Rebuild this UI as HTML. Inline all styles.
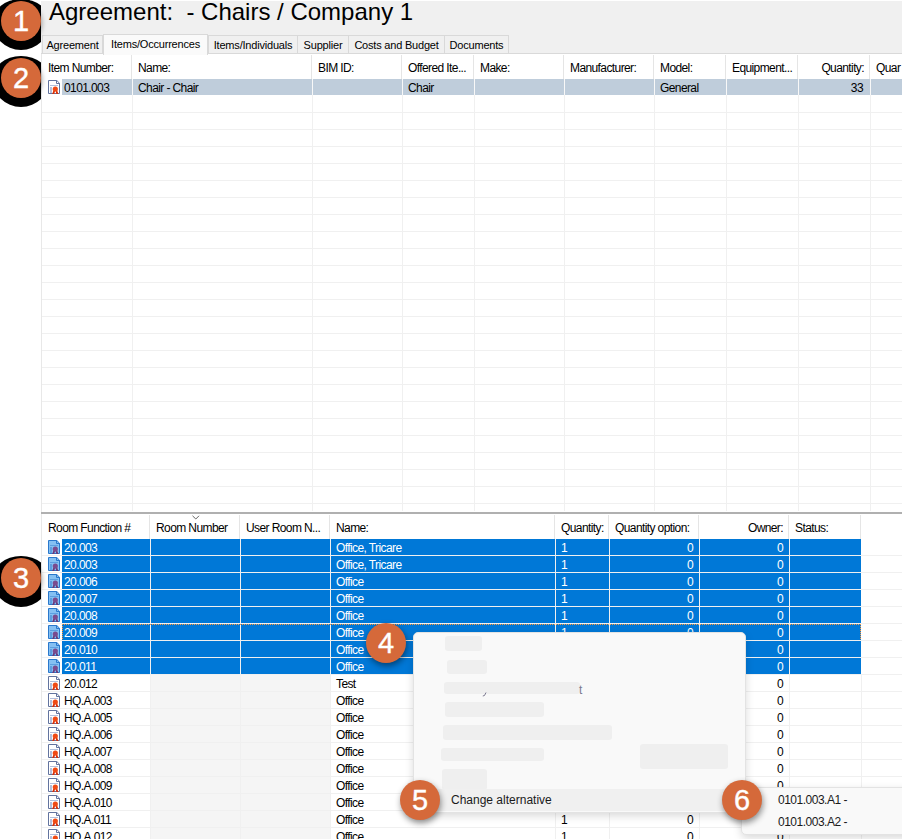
<!DOCTYPE html><html><head><meta charset="utf-8"><style>
*{box-sizing:border-box}
html,body{margin:0;padding:0}
body{width:902px;height:839px;overflow:hidden;position:relative;background:#fff;font-family:"Liberation Sans",sans-serif;font-size:11px;color:#000}
.abs{position:absolute}
.t{position:absolute;white-space:nowrap;line-height:16px;height:16px;font-size:12px;letter-spacing:-0.6px}
.ic{position:absolute}
.tab{position:absolute;border:1px solid #d9d9d9;background:#f0f0f0;font-size:11px;line-height:17px;text-align:center;white-space:nowrap;letter-spacing:-0.2px}
.vl{position:absolute;width:1px}
.hl{position:absolute;height:1px}
.red{position:absolute;background:#efefef;border-radius:3px}
.circ{position:absolute;width:40px;height:40px;border-radius:50%;background:#d5693a;color:#fff;font-size:29px;line-height:41px;text-align:center;-webkit-text-stroke:0.4px #fff}
</style></head><body>

<div class="abs" style="left:41px;top:1px;width:861px;height:838px;background:#f0f0f0"></div>
<div class="abs" style="left:49px;top:0px;font-size:24px;line-height:24px;white-space:nowrap">Agreement:&nbsp; - Chairs / Company 1</div>
<div class="tab" style="left:42px;top:35px;width:61px;height:19px;line-height:18px">Agreement</div>
<div class="tab" style="left:103px;top:34px;width:105px;height:21px;background:#fafafa;border-bottom:none;z-index:2;line-height:19px">Items/Occurrences</div>
<div class="tab" style="left:208px;top:35px;width:90px;height:19px;line-height:18px">Items/Individuals</div>
<div class="tab" style="left:297px;top:35px;width:52px;height:19px;line-height:18px">Supplier</div>
<div class="tab" style="left:348px;top:35px;width:97px;height:19px;line-height:18px">Costs and Budget</div>
<div class="tab" style="left:444px;top:35px;width:65px;height:19px;line-height:18px">Documents</div>
<div class="hl" style="left:41px;top:53px;width:861px;background:#d9d9d9"></div>
<div class="abs" style="left:41px;top:54px;width:861px;height:458px;background:#fff"></div>
<div class="abs" style="left:41px;top:96px;width:861px;height:408px;background:repeating-linear-gradient(to bottom,transparent 0,transparent 16px,#f0f0f0 16px,#f0f0f0 17px)"></div>
<div class="vl" style="left:131px;top:55px;height:24px;background:#e5e5e5"></div>
<div class="vl" style="left:132px;top:79px;height:432px;background:#f0f0f0"></div>
<div class="vl" style="left:311px;top:55px;height:24px;background:#e5e5e5"></div>
<div class="vl" style="left:312px;top:79px;height:432px;background:#f0f0f0"></div>
<div class="vl" style="left:401px;top:55px;height:24px;background:#e5e5e5"></div>
<div class="vl" style="left:402px;top:79px;height:432px;background:#f0f0f0"></div>
<div class="vl" style="left:473px;top:55px;height:24px;background:#e5e5e5"></div>
<div class="vl" style="left:474px;top:79px;height:432px;background:#f0f0f0"></div>
<div class="vl" style="left:563px;top:55px;height:24px;background:#e5e5e5"></div>
<div class="vl" style="left:564px;top:79px;height:432px;background:#f0f0f0"></div>
<div class="vl" style="left:653px;top:55px;height:24px;background:#e5e5e5"></div>
<div class="vl" style="left:654px;top:79px;height:432px;background:#f0f0f0"></div>
<div class="vl" style="left:725px;top:55px;height:24px;background:#e5e5e5"></div>
<div class="vl" style="left:726px;top:79px;height:432px;background:#f0f0f0"></div>
<div class="vl" style="left:797px;top:55px;height:24px;background:#e5e5e5"></div>
<div class="vl" style="left:798px;top:79px;height:432px;background:#f0f0f0"></div>
<div class="vl" style="left:869px;top:55px;height:24px;background:#e5e5e5"></div>
<div class="vl" style="left:870px;top:79px;height:432px;background:#f0f0f0"></div>
<div class="abs" style="left:62px;top:79px;width:840px;height:16px;background:#bfcddb"></div>
<div class="vl" style="left:132px;top:79px;height:16px;background:#f8f8f8"></div>
<div class="vl" style="left:312px;top:79px;height:16px;background:#f8f8f8"></div>
<div class="vl" style="left:402px;top:79px;height:16px;background:#f8f8f8"></div>
<div class="vl" style="left:474px;top:79px;height:16px;background:#f8f8f8"></div>
<div class="vl" style="left:564px;top:79px;height:16px;background:#f8f8f8"></div>
<div class="vl" style="left:654px;top:79px;height:16px;background:#f8f8f8"></div>
<div class="vl" style="left:726px;top:79px;height:16px;background:#f8f8f8"></div>
<div class="vl" style="left:798px;top:79px;height:16px;background:#f8f8f8"></div>
<div class="vl" style="left:870px;top:79px;height:16px;background:#f8f8f8"></div>
<div class="t" style="left:48px;top:60px">Item Number:</div>
<div class="t" style="left:138px;top:60px">Name:</div>
<div class="t" style="left:318px;top:60px">BIM ID:</div>
<div class="t" style="left:408px;top:60px">Offered Ite...</div>
<div class="t" style="left:480px;top:60px">Make:</div>
<div class="t" style="left:570px;top:60px">Manufacturer:</div>
<div class="t" style="left:660px;top:60px">Model:</div>
<div class="t" style="left:732px;top:60px">Equipment...</div>
<div class="t" style="left:798px;width:66px;text-align:right;top:60px">Quantity:</div>
<div class="t" style="left:876px;top:60px">Quar</div>
<svg class="ic" style="left:48px;top:80px" width="12" height="14" viewBox="0 0 12 14"><path d="M0.5 0.5H8.8L11.5 3.2V13.5H0.5Z" fill="#ffffff" stroke="#62739e"/><path d="M8.5 0.5V3.5H11.5" fill="none" stroke="#62739e"/><rect x="2" y="5" width="8" height="1" fill="#b4c0dc"/><rect x="2" y="7" width="2" height="6" fill="#b4c0dc"/><path d="M4.2 14L5.4 10.5H7.2L6.2 14ZM8.4 14L7.4 10.5H9.2L10.4 14Z" fill="#d83008"/><circle cx="7.3" cy="9" r="2.6" fill="#f04a14"/></svg>
<div class="t" style="left:64px;top:80px">0101.003</div>
<div class="t" style="left:138px;top:80px">Chair - Chair</div>
<div class="t" style="left:408px;top:80px">Chair</div>
<div class="t" style="left:660px;top:80px">General</div>
<div class="t" style="left:797px;width:66px;text-align:right;top:80px">33</div>
<div class="hl" style="left:41px;top:512px;width:861px;height:2px;background:#b0b0b0"></div>
<div class="abs" style="left:41px;top:514px;width:861px;height:325px;background:#fff"></div>
<div class="vl" style="left:149px;top:515px;height:24px;background:#e5e5e5"></div>
<div class="vl" style="left:239px;top:515px;height:24px;background:#e5e5e5"></div>
<div class="vl" style="left:329px;top:515px;height:24px;background:#e5e5e5"></div>
<div class="vl" style="left:554px;top:515px;height:24px;background:#e5e5e5"></div>
<div class="vl" style="left:608px;top:515px;height:24px;background:#e5e5e5"></div>
<div class="vl" style="left:698px;top:515px;height:24px;background:#e5e5e5"></div>
<div class="vl" style="left:788px;top:515px;height:24px;background:#e5e5e5"></div>
<div class="vl" style="left:860px;top:515px;height:24px;background:#e5e5e5"></div>
<div class="t" style="left:48px;top:520px">Room Function #</div>
<div class="t" style="left:156px;top:520px">Room Number</div>
<div class="t" style="left:246px;top:520px">User Room N...</div>
<div class="t" style="left:336px;top:520px">Name:</div>
<div class="t" style="left:561px;top:520px">Quantity:</div>
<div class="t" style="left:615px;top:520px">Quantity option:</div>
<div class="t" style="left:699px;width:84px;text-align:right;top:520px">Owner:</div>
<div class="t" style="left:795px;top:520px">Status:</div>
<svg class="abs" style="left:192px;top:515px" width="8" height="5" viewBox="0 0 8 5"><path d="M0.5 0.8L3.8 4L7 0.8" fill="none" stroke="#666" stroke-width="1"/></svg>
<div class="vl" style="left:41px;top:54px;height:458px;background:#e8e8e8"></div>
<div class="vl" style="left:41px;top:514px;height:325px;background:#e8e8e8"></div>
<div class="abs" style="left:62px;top:539px;width:799px;height:16px;background:#0078d7"></div>
<div class="hl" style="left:42px;top:555px;width:860px;background:#f0f0f0"></div>
<svg class="ic" style="left:48px;top:540px" width="12" height="14" viewBox="0 0 12 14"><path d="M0.5 0.5H8.8L11.5 3.2V13.5H0.5Z" fill="#85c0f2" stroke="#2a78cc"/><path d="M8.5 0.5V3.5H11.5" fill="none" stroke="#2a78cc"/><rect x="2" y="5" width="8" height="1" fill="#5d9fe0"/><rect x="2" y="7" width="2" height="6" fill="#5d9fe0"/><path d="M4.2 14L5.4 10.5H7.2L6.2 14ZM8.4 14L7.4 10.5H9.2L10.4 14Z" fill="#6a3a7a"/><circle cx="7.3" cy="9" r="2.6" fill="#7a4b8e"/></svg>
<div class="t" style="left:64px;top:540px;color:#fff">20.003</div>
<div class="t" style="left:336px;top:540px;color:#fff">Office, Tricare</div>
<div class="t" style="left:561px;top:540px;color:#fff">1</div>
<div class="t" style="left:609px;width:84px;text-align:right;top:540px;color:#fff">0</div>
<div class="t" style="left:699px;width:84px;text-align:right;top:540px;color:#fff">0</div>
<div class="abs" style="left:62px;top:556px;width:799px;height:16px;background:#0078d7"></div>
<div class="hl" style="left:42px;top:572px;width:860px;background:#f0f0f0"></div>
<svg class="ic" style="left:48px;top:557px" width="12" height="14" viewBox="0 0 12 14"><path d="M0.5 0.5H8.8L11.5 3.2V13.5H0.5Z" fill="#85c0f2" stroke="#2a78cc"/><path d="M8.5 0.5V3.5H11.5" fill="none" stroke="#2a78cc"/><rect x="2" y="5" width="8" height="1" fill="#5d9fe0"/><rect x="2" y="7" width="2" height="6" fill="#5d9fe0"/><path d="M4.2 14L5.4 10.5H7.2L6.2 14ZM8.4 14L7.4 10.5H9.2L10.4 14Z" fill="#6a3a7a"/><circle cx="7.3" cy="9" r="2.6" fill="#7a4b8e"/></svg>
<div class="t" style="left:64px;top:557px;color:#fff">20.003</div>
<div class="t" style="left:336px;top:557px;color:#fff">Office, Tricare</div>
<div class="t" style="left:561px;top:557px;color:#fff">1</div>
<div class="t" style="left:609px;width:84px;text-align:right;top:557px;color:#fff">0</div>
<div class="t" style="left:699px;width:84px;text-align:right;top:557px;color:#fff">0</div>
<div class="abs" style="left:62px;top:573px;width:799px;height:16px;background:#0078d7"></div>
<div class="hl" style="left:42px;top:589px;width:860px;background:#f0f0f0"></div>
<svg class="ic" style="left:48px;top:574px" width="12" height="14" viewBox="0 0 12 14"><path d="M0.5 0.5H8.8L11.5 3.2V13.5H0.5Z" fill="#85c0f2" stroke="#2a78cc"/><path d="M8.5 0.5V3.5H11.5" fill="none" stroke="#2a78cc"/><rect x="2" y="5" width="8" height="1" fill="#5d9fe0"/><rect x="2" y="7" width="2" height="6" fill="#5d9fe0"/><path d="M4.2 14L5.4 10.5H7.2L6.2 14ZM8.4 14L7.4 10.5H9.2L10.4 14Z" fill="#6a3a7a"/><circle cx="7.3" cy="9" r="2.6" fill="#7a4b8e"/></svg>
<div class="t" style="left:64px;top:574px;color:#fff">20.006</div>
<div class="t" style="left:336px;top:574px;color:#fff">Office</div>
<div class="t" style="left:561px;top:574px;color:#fff">1</div>
<div class="t" style="left:609px;width:84px;text-align:right;top:574px;color:#fff">0</div>
<div class="t" style="left:699px;width:84px;text-align:right;top:574px;color:#fff">0</div>
<div class="abs" style="left:62px;top:590px;width:799px;height:16px;background:#0078d7"></div>
<div class="hl" style="left:42px;top:606px;width:860px;background:#f0f0f0"></div>
<svg class="ic" style="left:48px;top:591px" width="12" height="14" viewBox="0 0 12 14"><path d="M0.5 0.5H8.8L11.5 3.2V13.5H0.5Z" fill="#85c0f2" stroke="#2a78cc"/><path d="M8.5 0.5V3.5H11.5" fill="none" stroke="#2a78cc"/><rect x="2" y="5" width="8" height="1" fill="#5d9fe0"/><rect x="2" y="7" width="2" height="6" fill="#5d9fe0"/><path d="M4.2 14L5.4 10.5H7.2L6.2 14ZM8.4 14L7.4 10.5H9.2L10.4 14Z" fill="#6a3a7a"/><circle cx="7.3" cy="9" r="2.6" fill="#7a4b8e"/></svg>
<div class="t" style="left:64px;top:591px;color:#fff">20.007</div>
<div class="t" style="left:336px;top:591px;color:#fff">Office</div>
<div class="t" style="left:561px;top:591px;color:#fff">1</div>
<div class="t" style="left:609px;width:84px;text-align:right;top:591px;color:#fff">0</div>
<div class="t" style="left:699px;width:84px;text-align:right;top:591px;color:#fff">0</div>
<div class="abs" style="left:62px;top:607px;width:799px;height:16px;background:#0078d7"></div>
<div class="hl" style="left:42px;top:623px;width:860px;background:#f0f0f0"></div>
<svg class="ic" style="left:48px;top:608px" width="12" height="14" viewBox="0 0 12 14"><path d="M0.5 0.5H8.8L11.5 3.2V13.5H0.5Z" fill="#85c0f2" stroke="#2a78cc"/><path d="M8.5 0.5V3.5H11.5" fill="none" stroke="#2a78cc"/><rect x="2" y="5" width="8" height="1" fill="#5d9fe0"/><rect x="2" y="7" width="2" height="6" fill="#5d9fe0"/><path d="M4.2 14L5.4 10.5H7.2L6.2 14ZM8.4 14L7.4 10.5H9.2L10.4 14Z" fill="#6a3a7a"/><circle cx="7.3" cy="9" r="2.6" fill="#7a4b8e"/></svg>
<div class="t" style="left:64px;top:608px;color:#fff">20.008</div>
<div class="t" style="left:336px;top:608px;color:#fff">Office</div>
<div class="t" style="left:561px;top:608px;color:#fff">1</div>
<div class="t" style="left:609px;width:84px;text-align:right;top:608px;color:#fff">0</div>
<div class="t" style="left:699px;width:84px;text-align:right;top:608px;color:#fff">0</div>
<div class="abs" style="left:62px;top:624px;width:799px;height:16px;background:#0078d7"></div>
<div class="hl" style="left:42px;top:640px;width:860px;background:#f0f0f0"></div>
<svg class="ic" style="left:48px;top:625px" width="12" height="14" viewBox="0 0 12 14"><path d="M0.5 0.5H8.8L11.5 3.2V13.5H0.5Z" fill="#85c0f2" stroke="#2a78cc"/><path d="M8.5 0.5V3.5H11.5" fill="none" stroke="#2a78cc"/><rect x="2" y="5" width="8" height="1" fill="#5d9fe0"/><rect x="2" y="7" width="2" height="6" fill="#5d9fe0"/><path d="M4.2 14L5.4 10.5H7.2L6.2 14ZM8.4 14L7.4 10.5H9.2L10.4 14Z" fill="#6a3a7a"/><circle cx="7.3" cy="9" r="2.6" fill="#7a4b8e"/></svg>
<div class="t" style="left:64px;top:625px;color:#fff">20.009</div>
<div class="t" style="left:336px;top:625px;color:#fff">Office</div>
<div class="t" style="left:561px;top:625px;color:#fff">1</div>
<div class="t" style="left:609px;width:84px;text-align:right;top:625px;color:#fff">0</div>
<div class="t" style="left:699px;width:84px;text-align:right;top:625px;color:#fff">0</div>
<div class="abs" style="left:62px;top:641px;width:799px;height:16px;background:#0078d7"></div>
<div class="hl" style="left:42px;top:657px;width:860px;background:#f0f0f0"></div>
<svg class="ic" style="left:48px;top:642px" width="12" height="14" viewBox="0 0 12 14"><path d="M0.5 0.5H8.8L11.5 3.2V13.5H0.5Z" fill="#85c0f2" stroke="#2a78cc"/><path d="M8.5 0.5V3.5H11.5" fill="none" stroke="#2a78cc"/><rect x="2" y="5" width="8" height="1" fill="#5d9fe0"/><rect x="2" y="7" width="2" height="6" fill="#5d9fe0"/><path d="M4.2 14L5.4 10.5H7.2L6.2 14ZM8.4 14L7.4 10.5H9.2L10.4 14Z" fill="#6a3a7a"/><circle cx="7.3" cy="9" r="2.6" fill="#7a4b8e"/></svg>
<div class="t" style="left:64px;top:642px;color:#fff">20.010</div>
<div class="t" style="left:336px;top:642px;color:#fff">Office</div>
<div class="t" style="left:561px;top:642px;color:#fff">1</div>
<div class="t" style="left:609px;width:84px;text-align:right;top:642px;color:#fff">0</div>
<div class="t" style="left:699px;width:84px;text-align:right;top:642px;color:#fff">0</div>
<div class="abs" style="left:62px;top:658px;width:799px;height:16px;background:#0078d7"></div>
<div class="hl" style="left:42px;top:674px;width:860px;background:#f0f0f0"></div>
<svg class="ic" style="left:48px;top:659px" width="12" height="14" viewBox="0 0 12 14"><path d="M0.5 0.5H8.8L11.5 3.2V13.5H0.5Z" fill="#85c0f2" stroke="#2a78cc"/><path d="M8.5 0.5V3.5H11.5" fill="none" stroke="#2a78cc"/><rect x="2" y="5" width="8" height="1" fill="#5d9fe0"/><rect x="2" y="7" width="2" height="6" fill="#5d9fe0"/><path d="M4.2 14L5.4 10.5H7.2L6.2 14ZM8.4 14L7.4 10.5H9.2L10.4 14Z" fill="#6a3a7a"/><circle cx="7.3" cy="9" r="2.6" fill="#7a4b8e"/></svg>
<div class="t" style="left:64px;top:659px;color:#fff">20.011</div>
<div class="t" style="left:336px;top:659px;color:#fff">Office</div>
<div class="t" style="left:561px;top:659px;color:#fff">1</div>
<div class="t" style="left:609px;width:84px;text-align:right;top:659px;color:#fff">0</div>
<div class="t" style="left:699px;width:84px;text-align:right;top:659px;color:#fff">0</div>
<div class="abs" style="left:151px;top:675px;width:179px;height:16px;background:#f5f5f5"></div>
<div class="hl" style="left:42px;top:691px;width:860px;background:#f0f0f0"></div>
<svg class="ic" style="left:48px;top:676px" width="12" height="14" viewBox="0 0 12 14"><path d="M0.5 0.5H8.8L11.5 3.2V13.5H0.5Z" fill="#ffffff" stroke="#62739e"/><path d="M8.5 0.5V3.5H11.5" fill="none" stroke="#62739e"/><rect x="2" y="5" width="8" height="1" fill="#b4c0dc"/><rect x="2" y="7" width="2" height="6" fill="#b4c0dc"/><path d="M4.2 14L5.4 10.5H7.2L6.2 14ZM8.4 14L7.4 10.5H9.2L10.4 14Z" fill="#d83008"/><circle cx="7.3" cy="9" r="2.6" fill="#f04a14"/></svg>
<div class="t" style="left:64px;top:676px;color:#000">20.012</div>
<div class="t" style="left:336px;top:676px;color:#000">Test</div>
<div class="t" style="left:561px;top:676px;color:#000">1</div>
<div class="t" style="left:609px;width:84px;text-align:right;top:676px;color:#000">0</div>
<div class="t" style="left:699px;width:84px;text-align:right;top:676px;color:#000">0</div>
<div class="abs" style="left:151px;top:692px;width:179px;height:16px;background:#f5f5f5"></div>
<div class="hl" style="left:42px;top:708px;width:860px;background:#f0f0f0"></div>
<svg class="ic" style="left:48px;top:693px" width="12" height="14" viewBox="0 0 12 14"><path d="M0.5 0.5H8.8L11.5 3.2V13.5H0.5Z" fill="#ffffff" stroke="#62739e"/><path d="M8.5 0.5V3.5H11.5" fill="none" stroke="#62739e"/><rect x="2" y="5" width="8" height="1" fill="#b4c0dc"/><rect x="2" y="7" width="2" height="6" fill="#b4c0dc"/><path d="M4.2 14L5.4 10.5H7.2L6.2 14ZM8.4 14L7.4 10.5H9.2L10.4 14Z" fill="#d83008"/><circle cx="7.3" cy="9" r="2.6" fill="#f04a14"/></svg>
<div class="t" style="left:64px;top:693px;color:#000">HQ.A.003</div>
<div class="t" style="left:336px;top:693px;color:#000">Office</div>
<div class="t" style="left:561px;top:693px;color:#000">1</div>
<div class="t" style="left:609px;width:84px;text-align:right;top:693px;color:#000">0</div>
<div class="t" style="left:699px;width:84px;text-align:right;top:693px;color:#000">0</div>
<div class="abs" style="left:151px;top:709px;width:179px;height:16px;background:#f5f5f5"></div>
<div class="hl" style="left:42px;top:725px;width:860px;background:#f0f0f0"></div>
<svg class="ic" style="left:48px;top:710px" width="12" height="14" viewBox="0 0 12 14"><path d="M0.5 0.5H8.8L11.5 3.2V13.5H0.5Z" fill="#ffffff" stroke="#62739e"/><path d="M8.5 0.5V3.5H11.5" fill="none" stroke="#62739e"/><rect x="2" y="5" width="8" height="1" fill="#b4c0dc"/><rect x="2" y="7" width="2" height="6" fill="#b4c0dc"/><path d="M4.2 14L5.4 10.5H7.2L6.2 14ZM8.4 14L7.4 10.5H9.2L10.4 14Z" fill="#d83008"/><circle cx="7.3" cy="9" r="2.6" fill="#f04a14"/></svg>
<div class="t" style="left:64px;top:710px;color:#000">HQ.A.005</div>
<div class="t" style="left:336px;top:710px;color:#000">Office</div>
<div class="t" style="left:561px;top:710px;color:#000">1</div>
<div class="t" style="left:609px;width:84px;text-align:right;top:710px;color:#000">0</div>
<div class="t" style="left:699px;width:84px;text-align:right;top:710px;color:#000">0</div>
<div class="abs" style="left:151px;top:726px;width:179px;height:16px;background:#f5f5f5"></div>
<div class="hl" style="left:42px;top:742px;width:860px;background:#f0f0f0"></div>
<svg class="ic" style="left:48px;top:727px" width="12" height="14" viewBox="0 0 12 14"><path d="M0.5 0.5H8.8L11.5 3.2V13.5H0.5Z" fill="#ffffff" stroke="#62739e"/><path d="M8.5 0.5V3.5H11.5" fill="none" stroke="#62739e"/><rect x="2" y="5" width="8" height="1" fill="#b4c0dc"/><rect x="2" y="7" width="2" height="6" fill="#b4c0dc"/><path d="M4.2 14L5.4 10.5H7.2L6.2 14ZM8.4 14L7.4 10.5H9.2L10.4 14Z" fill="#d83008"/><circle cx="7.3" cy="9" r="2.6" fill="#f04a14"/></svg>
<div class="t" style="left:64px;top:727px;color:#000">HQ.A.006</div>
<div class="t" style="left:336px;top:727px;color:#000">Office</div>
<div class="t" style="left:561px;top:727px;color:#000">1</div>
<div class="t" style="left:609px;width:84px;text-align:right;top:727px;color:#000">0</div>
<div class="t" style="left:699px;width:84px;text-align:right;top:727px;color:#000">0</div>
<div class="abs" style="left:151px;top:743px;width:179px;height:16px;background:#f5f5f5"></div>
<div class="hl" style="left:42px;top:759px;width:860px;background:#f0f0f0"></div>
<svg class="ic" style="left:48px;top:744px" width="12" height="14" viewBox="0 0 12 14"><path d="M0.5 0.5H8.8L11.5 3.2V13.5H0.5Z" fill="#ffffff" stroke="#62739e"/><path d="M8.5 0.5V3.5H11.5" fill="none" stroke="#62739e"/><rect x="2" y="5" width="8" height="1" fill="#b4c0dc"/><rect x="2" y="7" width="2" height="6" fill="#b4c0dc"/><path d="M4.2 14L5.4 10.5H7.2L6.2 14ZM8.4 14L7.4 10.5H9.2L10.4 14Z" fill="#d83008"/><circle cx="7.3" cy="9" r="2.6" fill="#f04a14"/></svg>
<div class="t" style="left:64px;top:744px;color:#000">HQ.A.007</div>
<div class="t" style="left:336px;top:744px;color:#000">Office</div>
<div class="t" style="left:561px;top:744px;color:#000">1</div>
<div class="t" style="left:609px;width:84px;text-align:right;top:744px;color:#000">0</div>
<div class="t" style="left:699px;width:84px;text-align:right;top:744px;color:#000">0</div>
<div class="abs" style="left:151px;top:760px;width:179px;height:16px;background:#f5f5f5"></div>
<div class="hl" style="left:42px;top:776px;width:860px;background:#f0f0f0"></div>
<svg class="ic" style="left:48px;top:761px" width="12" height="14" viewBox="0 0 12 14"><path d="M0.5 0.5H8.8L11.5 3.2V13.5H0.5Z" fill="#ffffff" stroke="#62739e"/><path d="M8.5 0.5V3.5H11.5" fill="none" stroke="#62739e"/><rect x="2" y="5" width="8" height="1" fill="#b4c0dc"/><rect x="2" y="7" width="2" height="6" fill="#b4c0dc"/><path d="M4.2 14L5.4 10.5H7.2L6.2 14ZM8.4 14L7.4 10.5H9.2L10.4 14Z" fill="#d83008"/><circle cx="7.3" cy="9" r="2.6" fill="#f04a14"/></svg>
<div class="t" style="left:64px;top:761px;color:#000">HQ.A.008</div>
<div class="t" style="left:336px;top:761px;color:#000">Office</div>
<div class="t" style="left:561px;top:761px;color:#000">1</div>
<div class="t" style="left:609px;width:84px;text-align:right;top:761px;color:#000">0</div>
<div class="t" style="left:699px;width:84px;text-align:right;top:761px;color:#000">0</div>
<div class="abs" style="left:151px;top:777px;width:179px;height:16px;background:#f5f5f5"></div>
<div class="hl" style="left:42px;top:793px;width:860px;background:#f0f0f0"></div>
<svg class="ic" style="left:48px;top:778px" width="12" height="14" viewBox="0 0 12 14"><path d="M0.5 0.5H8.8L11.5 3.2V13.5H0.5Z" fill="#ffffff" stroke="#62739e"/><path d="M8.5 0.5V3.5H11.5" fill="none" stroke="#62739e"/><rect x="2" y="5" width="8" height="1" fill="#b4c0dc"/><rect x="2" y="7" width="2" height="6" fill="#b4c0dc"/><path d="M4.2 14L5.4 10.5H7.2L6.2 14ZM8.4 14L7.4 10.5H9.2L10.4 14Z" fill="#d83008"/><circle cx="7.3" cy="9" r="2.6" fill="#f04a14"/></svg>
<div class="t" style="left:64px;top:778px;color:#000">HQ.A.009</div>
<div class="t" style="left:336px;top:778px;color:#000">Office</div>
<div class="t" style="left:561px;top:778px;color:#000">1</div>
<div class="t" style="left:609px;width:84px;text-align:right;top:778px;color:#000">0</div>
<div class="t" style="left:699px;width:84px;text-align:right;top:778px;color:#000">0</div>
<div class="abs" style="left:151px;top:794px;width:179px;height:16px;background:#f5f5f5"></div>
<div class="hl" style="left:42px;top:810px;width:860px;background:#f0f0f0"></div>
<svg class="ic" style="left:48px;top:795px" width="12" height="14" viewBox="0 0 12 14"><path d="M0.5 0.5H8.8L11.5 3.2V13.5H0.5Z" fill="#ffffff" stroke="#62739e"/><path d="M8.5 0.5V3.5H11.5" fill="none" stroke="#62739e"/><rect x="2" y="5" width="8" height="1" fill="#b4c0dc"/><rect x="2" y="7" width="2" height="6" fill="#b4c0dc"/><path d="M4.2 14L5.4 10.5H7.2L6.2 14ZM8.4 14L7.4 10.5H9.2L10.4 14Z" fill="#d83008"/><circle cx="7.3" cy="9" r="2.6" fill="#f04a14"/></svg>
<div class="t" style="left:64px;top:795px;color:#000">HQ.A.010</div>
<div class="t" style="left:336px;top:795px;color:#000">Office</div>
<div class="t" style="left:561px;top:795px;color:#000">1</div>
<div class="t" style="left:609px;width:84px;text-align:right;top:795px;color:#000">0</div>
<div class="t" style="left:699px;width:84px;text-align:right;top:795px;color:#000">0</div>
<div class="abs" style="left:151px;top:811px;width:179px;height:16px;background:#f5f5f5"></div>
<div class="hl" style="left:42px;top:827px;width:860px;background:#f0f0f0"></div>
<svg class="ic" style="left:48px;top:812px" width="12" height="14" viewBox="0 0 12 14"><path d="M0.5 0.5H8.8L11.5 3.2V13.5H0.5Z" fill="#ffffff" stroke="#62739e"/><path d="M8.5 0.5V3.5H11.5" fill="none" stroke="#62739e"/><rect x="2" y="5" width="8" height="1" fill="#b4c0dc"/><rect x="2" y="7" width="2" height="6" fill="#b4c0dc"/><path d="M4.2 14L5.4 10.5H7.2L6.2 14ZM8.4 14L7.4 10.5H9.2L10.4 14Z" fill="#d83008"/><circle cx="7.3" cy="9" r="2.6" fill="#f04a14"/></svg>
<div class="t" style="left:64px;top:812px;color:#000">HQ.A.011</div>
<div class="t" style="left:336px;top:812px;color:#000">Office</div>
<div class="t" style="left:561px;top:812px;color:#000">1</div>
<div class="t" style="left:609px;width:84px;text-align:right;top:812px;color:#000">0</div>
<div class="t" style="left:699px;width:84px;text-align:right;top:812px;color:#000">0</div>
<div class="abs" style="left:151px;top:828px;width:179px;height:16px;background:#f5f5f5"></div>
<div class="hl" style="left:42px;top:844px;width:860px;background:#f0f0f0"></div>
<svg class="ic" style="left:48px;top:829px" width="12" height="14" viewBox="0 0 12 14"><path d="M0.5 0.5H8.8L11.5 3.2V13.5H0.5Z" fill="#ffffff" stroke="#62739e"/><path d="M8.5 0.5V3.5H11.5" fill="none" stroke="#62739e"/><rect x="2" y="5" width="8" height="1" fill="#b4c0dc"/><rect x="2" y="7" width="2" height="6" fill="#b4c0dc"/><path d="M4.2 14L5.4 10.5H7.2L6.2 14ZM8.4 14L7.4 10.5H9.2L10.4 14Z" fill="#d83008"/><circle cx="7.3" cy="9" r="2.6" fill="#f04a14"/></svg>
<div class="t" style="left:64px;top:829px;color:#000">HQ.A.012</div>
<div class="t" style="left:336px;top:829px;color:#000">Office</div>
<div class="t" style="left:561px;top:829px;color:#000">1</div>
<div class="t" style="left:609px;width:84px;text-align:right;top:829px;color:#000">0</div>
<div class="t" style="left:699px;width:84px;text-align:right;top:829px;color:#000">0</div>
<div class="vl" style="left:150px;top:539px;height:300px;background:#f0f0f0"></div>
<div class="vl" style="left:240px;top:539px;height:300px;background:#f0f0f0"></div>
<div class="vl" style="left:330px;top:539px;height:300px;background:#f0f0f0"></div>
<div class="vl" style="left:555px;top:539px;height:300px;background:#f0f0f0"></div>
<div class="vl" style="left:609px;top:539px;height:300px;background:#f0f0f0"></div>
<div class="vl" style="left:699px;top:539px;height:300px;background:#f0f0f0"></div>
<div class="vl" style="left:789px;top:539px;height:300px;background:#f0f0f0"></div>
<div class="vl" style="left:861px;top:675px;height:164px;background:#f0f0f0"></div>
<div class="abs" style="left:62px;top:624px;width:799px;height:1px;background:repeating-linear-gradient(to right,#ff9a3c 0,#ff9a3c 1px,transparent 1px,transparent 2px)"></div>
<div class="abs" style="left:860px;top:624px;width:1px;height:16px;background:repeating-linear-gradient(to bottom,#ff9a3c 0,#ff9a3c 1px,transparent 1px,transparent 2px)"></div>
<div class="abs" style="left:62px;top:624px;width:1px;height:16px;background:repeating-linear-gradient(to bottom,#ff9a3c 0,#ff9a3c 1px,transparent 1px,transparent 2px)"></div>
<div class="abs" style="left:413px;top:632px;width:333px;height:181px;background:#f9f9f9;border:1px solid #e3e3e3;border-radius:5px;box-shadow:0 3px 8px rgba(0,0,0,0.15)"></div>
<div class="red" style="left:445px;top:636px;width:37px;height:15px"></div>
<div class="red" style="left:447px;top:660px;width:40px;height:14px"></div>
<div class="red" style="left:444px;top:682px;width:136px;height:12px"></div>
<div class="red" style="left:445px;top:702px;width:99px;height:15px"></div>
<div class="red" style="left:443px;top:725px;width:169px;height:15px"></div>
<div class="red" style="left:441px;top:748px;width:103px;height:13px"></div>
<div class="red" style="left:640px;top:744px;width:88px;height:25px"></div>
<div class="red" style="left:442px;top:769px;width:45px;height:21px"></div>
<div class="t" style="left:579px;top:682px;color:#7c7a90;font-size:12px;letter-spacing:0">t</div>
<svg class="abs" style="left:482px;top:692px" width="5" height="5" viewBox="0 0 5 5"><path d="M4 0.5L2.5 3.5L0.8 4" fill="none" stroke="#7c7a90" stroke-width="1"/></svg>
<div class="abs" style="left:417px;top:789px;width:325px;height:22px;background:#f0f0f0;border-radius:3px"></div>
<div class="t" style="left:451px;top:792px;font-size:12px;letter-spacing:0;color:#1a1a1a">Change alternative</div>
<div class="abs" style="left:741px;top:787px;width:180px;height:48px;background:#f9f9f9;border:1px solid #e3e3e3;border-radius:5px;box-shadow:0 3px 8px rgba(0,0,0,0.15)"></div>
<div class="t" style="left:778px;top:792px;font-size:12px;letter-spacing:-0.5px;color:#1a1a1a">0101.003.A1 -</div>
<div class="t" style="left:778px;top:814px;font-size:12px;letter-spacing:-0.5px;color:#1a1a1a">0101.003.A2 -</div>
<div class="abs" style="left:-8px;top:-1px;width:58px;height:48px;border-radius:50%;background:#000;clip-path:inset(0 9px 0 0)"></div>
<div class="abs" style="left:-8px;top:-8px;width:58px;height:58px;border-radius:50%;background:#000;clip-path:inset(29px 9px 0 0)"></div>
<div class="abs" style="left:-8px;top:56px;width:58px;height:48px;border-radius:50%;background:#000;clip-path:inset(0 9px 0 0)"></div>
<div class="abs" style="left:-8px;top:49px;width:58px;height:58px;border-radius:50%;background:#000;clip-path:inset(29px 9px 0 0)"></div>
<div class="abs" style="left:-8px;top:556px;width:58px;height:48px;border-radius:50%;background:#000;clip-path:inset(0 9px 0 0)"></div>
<div class="abs" style="left:-8px;top:549px;width:58px;height:58px;border-radius:50%;background:#000;clip-path:inset(29px 9px 0 0)"></div>
<div class="circ" style="left:1px;top:1px;box-shadow:1px 2px 5px rgba(0,0,0,0.35)">1</div>
<div class="circ" style="left:1px;top:58px;box-shadow:1px 2px 5px rgba(0,0,0,0.35)">2</div>
<div class="circ" style="left:1px;top:558px;box-shadow:1px 2px 5px rgba(0,0,0,0.35)">3</div>
<div class="circ" style="left:366px;top:623px;box-shadow:1px 3px 6px rgba(0,0,0,0.45)">4</div>
<div class="circ" style="left:400px;top:780px;box-shadow:1px 3px 6px rgba(0,0,0,0.45)">5</div>
<div class="circ" style="left:722px;top:780px;box-shadow:1px 3px 6px rgba(0,0,0,0.45)">6</div>
</body></html>
